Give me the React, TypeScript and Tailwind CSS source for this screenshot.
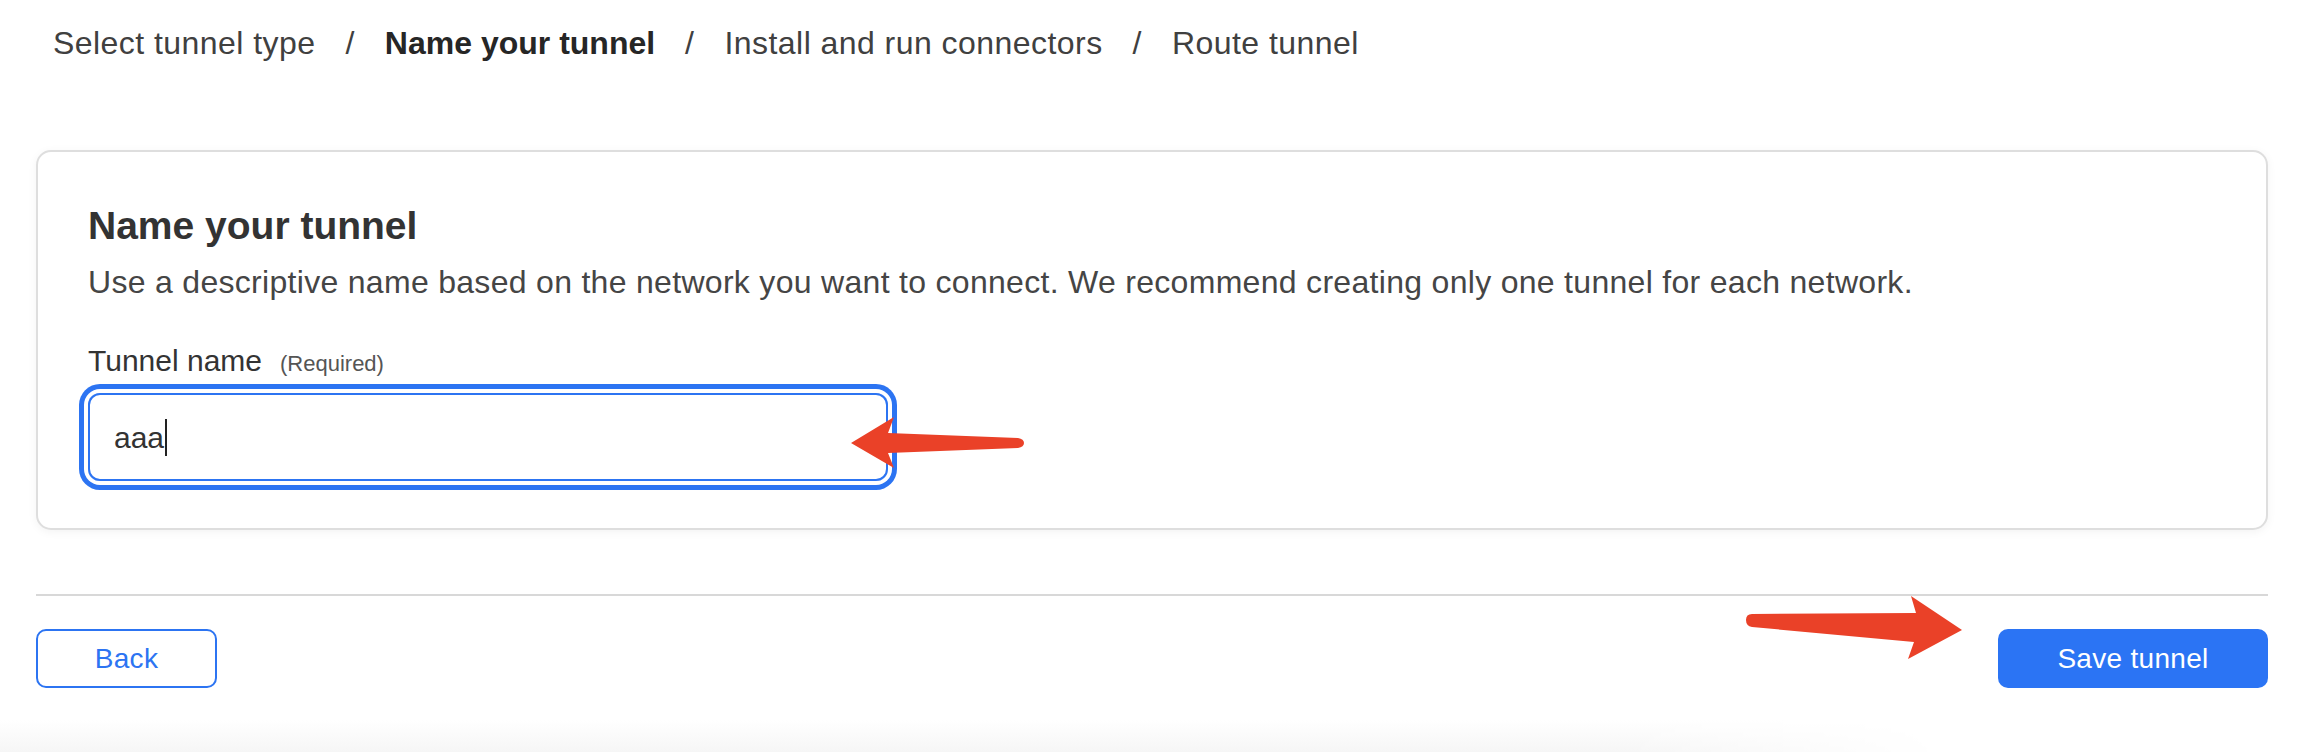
import React from 'react';

const steps = ['Select tunnel type', 'Name your tunnel', 'Install and run connectors', 'Route tunnel'];

function Arrows() {
    return (
        <svg className="pointer-events-none absolute left-0 top-0" width="2316" height="752" viewBox="0 0 2316 752">
            <path
                fill="#ea4128"
                d="M851 443 L894 417 L888 433 L1018 438 Q1024 439 1024 443 Q1024 447 1018 448 L888 453 L894 468 Z"
            />
            <path
                fill="#ea4128"
                d="M1752 614 L1916 613 L1911 596 L1962 630 L1908 659 L1914 642 L1752 627 Q1746 626 1746 620 Q1746 614 1752 614 Z"
            />
        </svg>
    );
}

export default function App() {
    return (
        <div className="relative w-[2316px] h-[752px] overflow-hidden bg-white font-['Liberation_Sans',Arial,sans-serif]">
            <nav className="flex items-center gap-[30px] pl-[53px] pt-[23px] text-[32px] leading-[40px] tracking-[0.45px] text-[#404040]">
                {steps.map((s, i) => (
                    <React.Fragment key={s}>
                        {i > 0 && <span>/</span>}
                        <span className={i === 1 ? 'font-bold tracking-normal text-[#262626]' : ''}>{s}</span>
                    </React.Fragment>
                ))}
            </nav>

            <div className="pl-[36px] pr-[48px]">
                <section className="mt-[87px] rounded-[15px] border-2 border-[#dedede] bg-white px-[50px] pt-[51px] pb-[47px] shadow-[0_2px_10px_rgba(0,0,0,0.05)]">
                    <h1 className="text-[39px] leading-[46px] font-bold text-[#333333]">Name your tunnel</h1>
                    <p className="mt-[14px] text-[32px] leading-[38px] tracking-[0.3px] text-[#454545]">
                        Use a descriptive name based on the network you want to connect. We recommend creating only one tunnel for each network.
                    </p>
                    <label className="mt-[42px] flex items-baseline gap-[18px] text-[30px] leading-[36px] text-[#333333]">
                        Tunnel name
                        <span className="text-[22px] text-[#555555]">(Required)</span>
                    </label>
                    <div className="mt-[11px] flex h-[88px] w-[800px] items-center rounded-[12px] border-2 border-[#2c74f2] pl-[24px] text-[30px] text-[#333333] ring-[5px] ring-[#2c74f2] ring-offset-[4px]">
                        aaa
                        <span className="ml-[1px] inline-block h-[37px] w-[2px] bg-[#222222]" />
                    </div>
                </section>

                <div className="mt-[64px] h-[2px] bg-[#d8d8d8]" />

                <div className="mt-[33px] flex items-center justify-between">
                    <button className="h-[59px] w-[181px] rounded-[10px] border-2 border-[#2c74f2] text-[28px] tracking-[0.3px] text-[#2c74f2]">
                        Back
                    </button>
                    <button className="h-[59px] w-[270px] rounded-[10px] bg-[#2b74f4] text-[28px] tracking-[0.3px] text-white">
                        Save tunnel
                    </button>
                </div>
            </div>

            <div className="mt-[32px] h-[32px] w-full bg-gradient-to-b from-white to-[#f6f6f6] [mask-image:linear-gradient(to_right,#000_70%,transparent_84%)]" />

            <Arrows />
        </div>
    );
}
